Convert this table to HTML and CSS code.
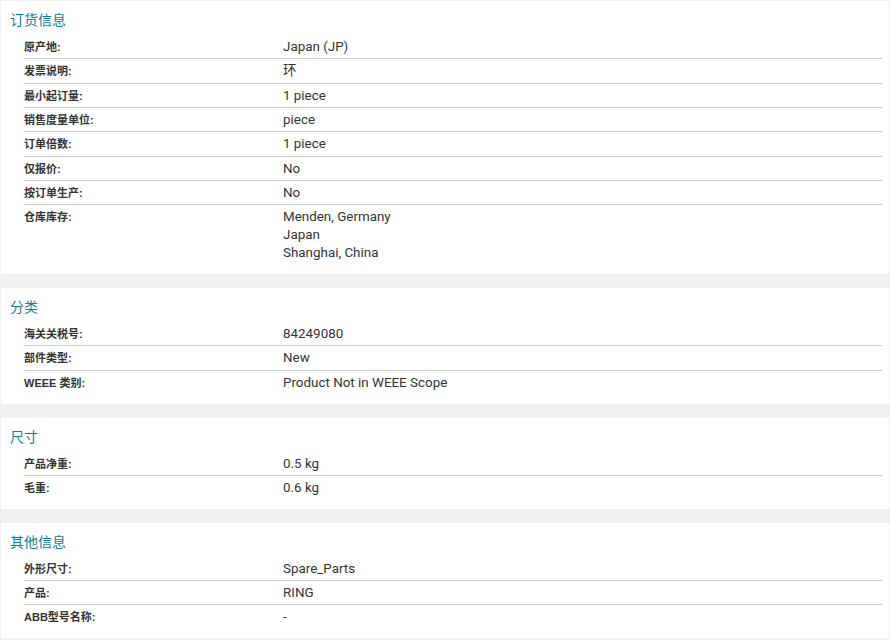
FILE: index.html
```html
<!DOCTYPE html>
<html lang="zh">
<head>
<meta charset="utf-8">
<link rel="stylesheet" href="styles.css">
</head>
<body>
<div class="page">
  <section class="card">
    <h2 class="title">订货信息</h2>
    <div class="rows">
      <div class="row"><div class="label">原产地:</div><div class="value">Japan (JP)</div></div>
      <div class="row"><div class="label">发票说明:</div><div class="value">环</div></div>
      <div class="row"><div class="label">最小起订量:</div><div class="value">1 piece</div></div>
      <div class="row"><div class="label">销售度量单位:</div><div class="value">piece</div></div>
      <div class="row"><div class="label">订单倍数:</div><div class="value">1 piece</div></div>
      <div class="row"><div class="label">仅报价:</div><div class="value">No</div></div>
      <div class="row"><div class="label">按订单生产:</div><div class="value">No</div></div>
      <div class="row"><div class="label">仓库库存:</div><div class="value">Menden, Germany<br>Japan<br>Shanghai, China</div></div>
    </div>
  </section>
  <section class="card">
    <h2 class="title">分类</h2>
    <div class="rows">
      <div class="row"><div class="label">海关关税号:</div><div class="value">84249080</div></div>
      <div class="row"><div class="label">部件类型:</div><div class="value">New</div></div>
      <div class="row"><div class="label">WEEE 类别:</div><div class="value">Product Not in WEEE Scope</div></div>
    </div>
  </section>
  <section class="card">
    <h2 class="title">尺寸</h2>
    <div class="rows">
      <div class="row"><div class="label">产品净重:</div><div class="value">0.5 kg</div></div>
      <div class="row"><div class="label">毛重:</div><div class="value">0.6 kg</div></div>
    </div>
  </section>
  <section class="card">
    <h2 class="title">其他信息</h2>
    <div class="rows">
      <div class="row"><div class="label">外形尺寸:</div><div class="value">Spare_Parts</div></div>
      <div class="row"><div class="label">产品:</div><div class="value">RING</div></div>
      <div class="row"><div class="label">ABB型号名称:</div><div class="value">-</div></div>
    </div>
  </section>
</div>
</body>
</html>
```

FILE: styles.css
```css
html, body {
  margin: 0;
  padding: 0;
  background: #f0f0f0;
}
body {
  font-family: Roboto, "Noto Sans CJK SC", sans-serif;
  color: #333;
}
.page {
  display: flex;
  flex-direction: column;
  gap: 14px;
  padding: 1px 1px 0 1px;
}
.card {
  background: #fff;
  padding: 0 7px 9.5px 9px;
}
.title {
  margin: 0;
  font-family: "Noto Sans CJK SC", sans-serif;
  font-weight: normal;
  font-size: 14px;
  line-height: 20px;
  color: #0f8196;
  padding: 8px 0 6px 0;
}
.rows {
  margin-left: 14px;
}
.row {
  display: grid;
  grid-template-columns: 259px 1fr;
  padding: 3px 0 2.33px 0;
  border-bottom: 1px solid #cccccc;
}
.row:last-child {
  border-bottom: none;
}
.label {
  font-family: "Liberation Sans", "Noto Sans CJK SC", sans-serif;
  font-weight: bold;
  font-size: 11px;
  line-height: 18px;
  color: #333;
}
.value {
  font-family: Roboto, "Noto Sans CJK SC", sans-serif;
  font-size: 13.4px;
  line-height: 18px;
  color: #333;
}
```
